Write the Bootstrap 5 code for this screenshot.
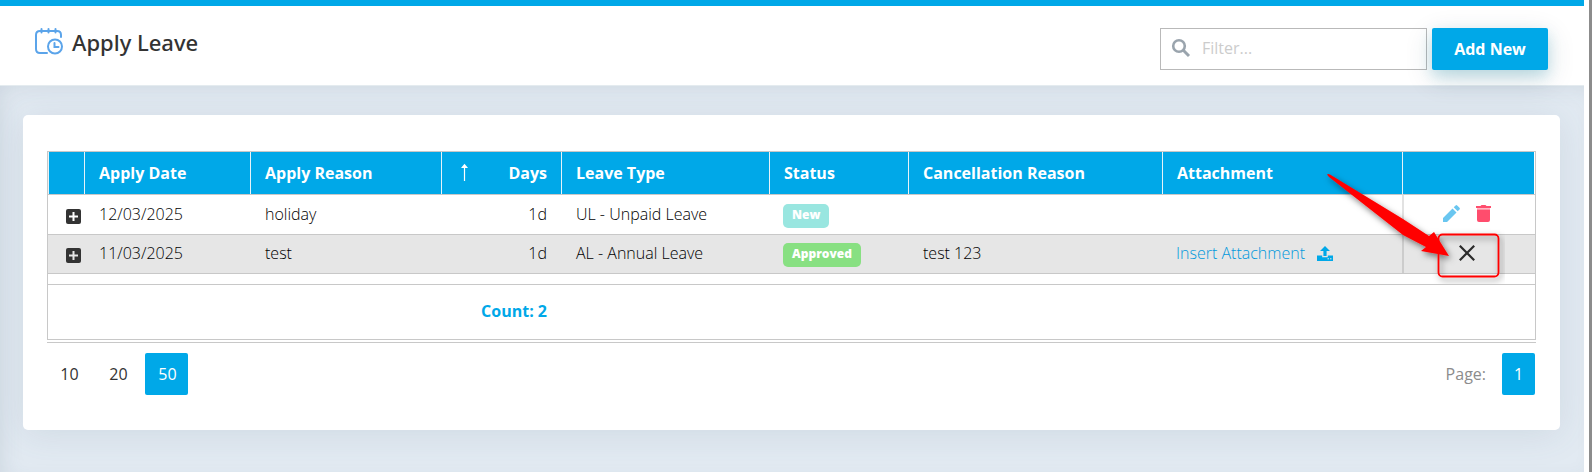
<!DOCTYPE html>
<html lang="en">
<head>
<meta charset="utf-8">
<meta name="viewport" content="width=device-width, initial-scale=1">
<title>Apply Leave</title>
<link href="https://cdn.jsdelivr.net/npm/bootstrap@5.3.0/dist/css/bootstrap.min.css" rel="stylesheet">
<style>
:root{--brand:#00a8e8;--line:#c8c8c8;--ink:#333}
body{font-family:"Open Sans","Noto Sans",sans-serif;font-size:16px;color:var(--ink);background:#fff;border-right:3px solid #8c8c8c}
.page{margin-right:5px;background:#e2eaf2;border-top:6px solid var(--brand);overflow:hidden}
.page-head{height:80px;padding:22px 36px 0 34px;background:#fff;border-bottom:1px solid #e4ebef}
.page-title{font-family:"Noto Sans","Open Sans",sans-serif;font-size:22px;font-weight:500;line-height:28px}
.page-body{padding:29px 24px 42px 23px;box-shadow:inset 8px 6px 24px -8px rgba(60,80,100,.14)}
.head-tools{gap:5px}
.filter-box{width:267px;height:42px;border:1px solid #b9b9b9;background:#fff;padding:0 10px;gap:11px}
.filter-box input{height:38px;font-size:16px;color:var(--ink)}
.filter-box input::placeholder{color:#ccc}
.btn-brand{height:42px;width:116px;background:var(--brand);color:#fff;font-weight:700;border:0;border-radius:2px;padding:0;box-shadow:0 8px 28px rgba(0,60,80,.16),0 6px 14px rgba(0,150,190,.18)}
.btn-brand:hover{background:#0097d1;color:#fff}
.panel{border-radius:5px;padding:36px 24px 35px;box-shadow:0 4px 36px rgba(70,100,125,.12)}
.grid{border:1px solid var(--line)}
.grid table{table-layout:fixed;border-collapse:separate;border-spacing:0}
.grid th{height:42px;padding:0 14px;background:var(--brand);color:#fff;font-weight:700;border-left:1px solid #e6f3f9}
.grid th:last-child{border-right:1px solid #fff}
.grid tbody td{height:39px;padding:0 14px 2px 15px;border-top:1px solid var(--line);line-height:24px;vertical-align:middle;font-weight:300;color:#000}
.grid tbody td:nth-child(6),.grid tbody td:nth-child(8){padding-left:14px}
.grid tbody tr:first-child td{height:40px}
.grid tbody tr:nth-child(2) td{background:#e6e6e6}
.grid tbody td:last-child{border-left:2px solid #e2e2e2;padding-right:20px}
.grid tbody tr:nth-child(2) td:last-child{border-left-color:#ccc}
.grid tbody td:first-child{padding-bottom:0}
.grid tfoot td{padding:0 14px;border-top:1px solid var(--line)}
.grid tfoot .spacer td{height:11px}
.grid tfoot .totals td{height:55px;padding-bottom:2px}
.c-toggle{width:36px}.c-date{width:166px}.c-reason{width:191px}.c-days{width:120px}.c-type{width:208px}.c-status{width:139px}.c-cancel{width:254px}.c-actions{width:133px}
.brand-text{color:var(--brand)}
.grid a.brand-text{color:#0098dc}
.icon-btn{border:0;background:none;padding:0;line-height:0;color:var(--ink)}
.toggle-btn{padding-right:3px}
.tag{display:block;width:max-content;margin-top:4px;font-size:12px;font-weight:800;line-height:18px;padding:2px 9px 4px;border-radius:5px;color:#fff}
.tag-new{background:#99e6e0}
.tag-approved{background:#88e082}
.pager{border-top:1px solid var(--line);margin-top:2px;padding:10px 1px 0 0}
.pager button{height:42px;border:0;border-radius:2px;background:none;color:var(--ink);padding:0}
.pager .sizes{gap:6px}
.pager .sizes button{width:43px;padding-left:2px}
.pager .pages button{width:33px}
.pager button.current{background:var(--brand);color:#fff}
.muted{color:#8c8c8c}
.callout-mark{position:absolute;right:30px;top:12px;pointer-events:none}
</style>
</head>
<body>
<div class="page min-vh-100 d-flex flex-column">
  <header class="page-head d-flex align-items-start justify-content-between">
    <div class="d-flex align-items-start gap-2">
      <svg width="30" height="30" viewBox="0 0 30 30" fill="none" stroke="#5ba4ea" stroke-width="2" stroke-linecap="round" aria-hidden="true">
        <path d="M27 9V7q0-4-4-4H6Q2 3 2 7v14q0 4 4 4h7M7.500 1v3.500M14.500 1v3.500M21.500 1v3.500"/><circle cx="21" cy="18.500" r="7"/><path d="M20.500 15v4h4"/>
      </svg>
      <h1 class="page-title mb-0">Apply Leave</h1>
    </div>
    <div class="head-tools d-flex">
      <label class="filter-box d-flex align-items-start">
        <svg class="flex-shrink-0 mt-2" width="20" height="22" viewBox="0 0 20 22" fill="none" stroke="#9aa4ad" aria-hidden="true"><circle cx="8" cy="9" r="5.800" stroke-width="2.600"/><path d="M12.300 13.300 18 19" stroke-width="3"/></svg>
        <input type="text" class="form-control border-0 shadow-none bg-transparent p-0" placeholder="Filter..." aria-label="Filter">
      </label>
      <button type="button" class="btn btn-brand">Add New</button>
    </div>
  </header>
  <main class="page-body flex-grow-1">
    <section class="panel bg-white">
      <div class="grid position-relative">
        <table class="w-100">
          <colgroup><col class="c-toggle"><col class="c-date"><col class="c-reason"><col class="c-days"><col class="c-type"><col class="c-status"><col class="c-cancel"><col><col class="c-actions"></colgroup>
          <thead>
            <tr>
              <th></th><th>Apply Date</th><th>Apply Reason</th>
              <th><div class="d-flex justify-content-between align-items-center"><svg width="16" height="20" viewBox="0 0 16 20" fill="none" stroke="#fff" aria-hidden="true"><path d="M8.500 18V2" stroke-width="1.200"/><path d="M5 5 8.500 .8 12 5z" fill="#fff" stroke="none"/></svg>Days</div></th>
              <th>Leave Type</th><th>Status</th><th>Cancellation Reason</th><th>Attachment</th><th></th>
            </tr>
          </thead>
          <tbody>
            <tr>
              <td class="px-0 text-end"><button type="button" class="icon-btn toggle-btn" aria-label="Expand"><svg width="15" height="15" viewBox="0 0 15 15"><rect width="15" height="15" rx="2" fill="#333"/><path d="M7.500 3v9M3 7.500h9" stroke="#fff" stroke-width="2"/></svg></button></td>
              <td>12/03/2025</td><td>holiday</td><td class="text-end">1d</td><td>UL - Unpaid Leave</td>
              <td><span class="tag tag-new">New</span></td><td></td><td></td>
              <td><div class="d-flex justify-content-center gap-3">
                <button type="button" class="icon-btn" aria-label="Edit"><svg width="17" height="17" viewBox="0 0 17 17" fill="#69c6f0"><path d="M0 17v-4L9.500 3.500l4 4L4 17zM10.700 2.300 12.600.5q.8-.8 1.600 0l2.300 2.300q.8.800 0 1.600l-1.800 1.900z"/></svg></button>
                <button type="button" class="icon-btn" aria-label="Delete"><svg width="15" height="17" viewBox="0 0 15 17" fill="#ff4d6d"><path d="M0 1h4.500L5.500 0h4l1 1H15v2H0zM1 4.500h13V15q0 2-2 2H3q-2 0-2-2z"/><path d="M1 3h13v1.500H1z" opacity=".4"/></svg></button>
              </div></td>
            </tr>
            <tr>
              <td class="px-0 text-end"><button type="button" class="icon-btn toggle-btn" aria-label="Expand"><svg width="15" height="15" viewBox="0 0 15 15"><rect width="15" height="15" rx="2" fill="#333"/><path d="M7.500 3v9M3 7.500h9" stroke="#e6e6e6" stroke-width="2"/></svg></button></td>
              <td>11/03/2025</td><td>test</td><td class="text-end">1d</td><td>AL - Annual Leave</td>
              <td><span class="tag tag-approved">Approved</span></td><td>test 123</td>
              <td><a href="#" class="brand-text text-decoration-none d-inline-flex align-items-center gap-2 text-nowrap">Insert Attachment <svg class="ms-1" width="16" height="15" viewBox="0 0 16 15" fill="#00a8e8" aria-hidden="true"><path d="M8 0l5 5H9.600v5H6.400V5H3zM0 9.500h5.200v1.700h5.600V9.500H16V15H0z"/><path d="M10.500 12.800h1.500M13 12.800h1.500" stroke="#e6e6e6"/></svg></a></td>
              <td><div class="d-flex justify-content-center"><button type="button" class="icon-btn" aria-label="Cancel leave"><svg width="16" height="16" viewBox="0 0 16 16" stroke="#2b2b2b" stroke-width="2.200"><path d="M.8.8l14.400 14.400M15.200.8.8 15.200"/></svg></button></div></td>
            </tr>
          </tbody>
          <tfoot>
            <tr class="spacer"><td colspan="9"></td></tr>
            <tr class="totals"><td colspan="4" class="text-end brand-text fw-bold">Count: 2</td><td colspan="5"></td></tr>
          </tfoot>
        </table>
        <svg class="callout-mark" width="190" height="120" viewBox="0 0 190 120" aria-hidden="true">
          <defs><filter id="drop" x="-20%" y="-20%" width="140%" height="150%"><feDropShadow dx="2" dy="3" stdDeviation="3" flood-opacity=".5"/></filter></defs>
          <g filter="url(#drop)"><rect x="123.500" y="70.500" width="60" height="42" rx="4" fill="none" stroke="red" stroke-width="1.800"/>
          <path d="M12 10.500Q13 9.500 15 10.500L88 55 114 72 119 68 134 92 106 87 111 83 88 71 14 13z" fill="red"/></g>
        </svg>
      </div>
      <div class="pager d-flex justify-content-between align-items-center">
        <div class="sizes d-flex" role="group" aria-label="Page size"><button type="button">10</button><button type="button">20</button><button type="button" class="current">50</button></div>
        <div class="pages d-flex align-items-center gap-3"><span class="muted">Page:</span><button type="button" class="current">1</button></div>
      </div>
    </section>
  </main>
</div>
<script src="https://cdn.jsdelivr.net/npm/bootstrap@5.3.0/dist/js/bootstrap.bundle.min.js"></script>
</body>
</html>
